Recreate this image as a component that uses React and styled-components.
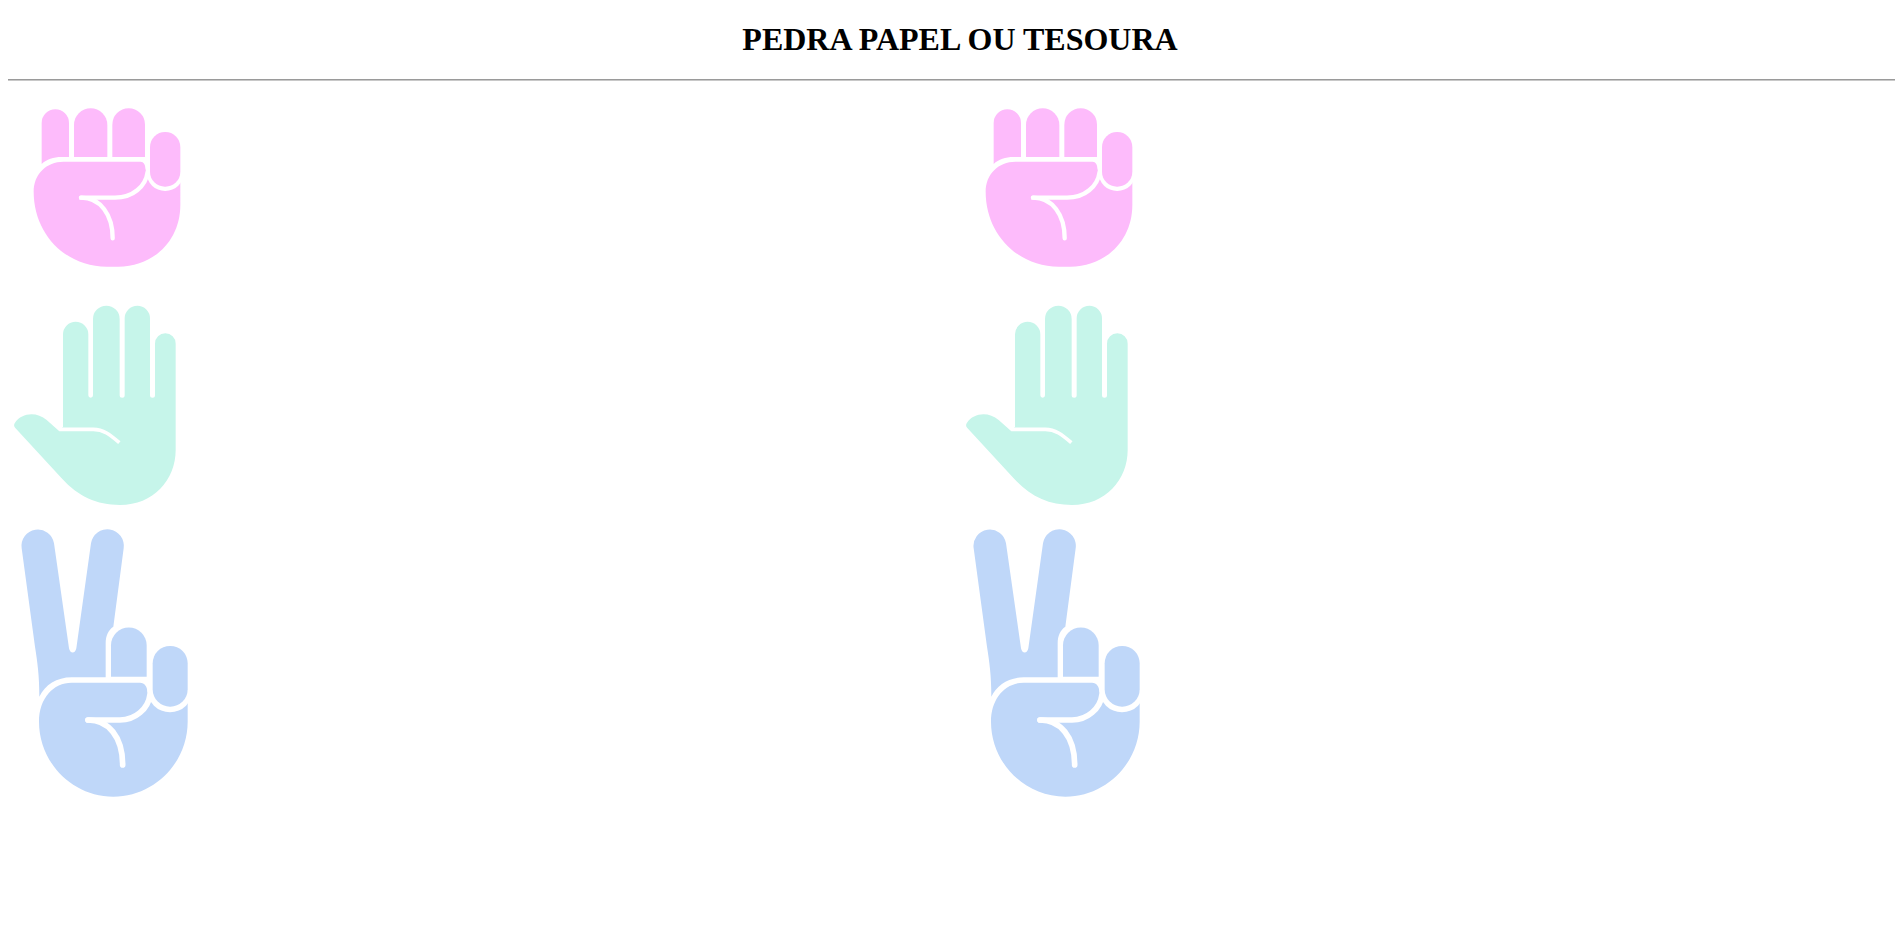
import React from "react";
import styled, { createGlobalStyle } from "styled-components";

const Global = createGlobalStyle`
  html { overflow: hidden; }
  body { margin: 8px; width: 1904px; background: #fff; font-family: "Liberation Serif", "Times New Roman", serif; }
`;

const Title = styled.h1`
  margin: 12.5px 0 21.94px;
  font-size: 32px;
  font-weight: 700;
  text-align: center;
  color: #000;
`;

const Rule = styled.hr`
  margin: 8px 0 9px;
  height: 0;
  border: 0;
  border-top: 1px solid #9a9a9a;
  border-bottom: 1px solid #c8c8c8;
`;

const Board = styled.main`
  display: grid;
  grid-template-columns: 1fr 1fr;
`;

const Column = styled.section`
  display: flex;
  flex-direction: column;
`;

const HandSvg = styled.svg`
  display: block;
  width: 202px;
  height: ${(p) => p.$h}px;
`;

const Rock = () => (
  <HandSvg $h={190} viewBox="24 0 606 570" aria-label="Pedra">
    <g fill="#FDBBFB">
      <path d="M125 222V99A41 41 0 0 1 207 99V201H185C160 201 140 208 125 222Z" />
      <path d="M222 201V105A50 50 0 0 1 322 105V201Z" />
      <path d="M337 201V104A49 49 0 0 1 435 104V201Z" />
      <path d="M101 305C101 252 140 215 190 215H422C431 215 436 224 436 235L442 262L541 270V345C541 452 460 530 355 530H320C195 530 101 430 101 305Z" />
    </g>
    <rect x="440" y="121" width="111" height="182" rx="55" fill="#fff" />
    <rect x="450" y="126" width="91" height="164" rx="45" fill="#FDBBFB" />
    <g fill="none" stroke="#fff" strokeWidth="13" strokeLinecap="round">
      <path d="M443 245C437 290 398 323 345 323H243" />
      <path d="M243 323C302 323 338 375 338 445" />
    </g>
  </HandSvg>
);

const Paper = () => (
  <HandSvg $h={235} viewBox="24 -30 606 705" aria-label="Papel">
    <path
      fill="#C6F5EA"
      d="M189 410V133A38 38 0 0 1 265 133V316A7 7 0 0 0 279 316V87A40 40 0 0 1 359 87V316A7.5 7.5 0 0 0 374 316V85A38 38 0 0 1 450 85V316A7.5 7.5 0 0 0 465 316V161A31 31 0 0 1 527 161V480C527 570 460 645 360 645C290 645 235 620 185 565L46 414Q39 406 45 398C65 368 110 364 140 390L178 424Z"
    />
    <path d="M178 418H280C310 418 330 434 358 458" fill="none" stroke="#fff" strokeWidth="11" />
  </HandSvg>
);

const Scissors = () => (
  <HandSvg $h={295} viewBox="24 0 606 885" aria-label="Tesoura">
    <g fill="#BFD7F9">
      <path d="M65 100A49 49 0 0 1 162 85L207 400C210 417 226 417 229 400L273 85A49 49 0 0 1 371 100L340 335C325 345 317 362 317 385V487H215C170 487 135 510 118 545C118 480 112 440 105 395Z" />
      <path d="M333 485V391A53.5 53.5 0 0 1 440 391V485Z" />
      <path d="M117 620C117 550 160 503 215 503H420C434 503 442 515 442 530L450 555L563 555V620C563 743 463 845 340 845C217 845 117 743 117 620Z" />
    </g>
    <rect x="442" y="384" width="136" height="208" rx="68" fill="#fff" />
    <rect x="458" y="393" width="105" height="182" rx="52" fill="#BFD7F9" />
    <g fill="none" stroke="#fff" strokeWidth="17" strokeLinecap="round">
      <path d="M450 538C445 582 405 615 360 615H264" />
      <path d="M264 615C325 615 368 665 368 750" />
    </g>
  </HandSvg>
);

const Hands = () => (
  <Column>
    <Rock />
    <Paper />
    <Scissors />
  </Column>
);

export default function App() {
  return (
    <>
      <Global />
      <Title>PEDRA PAPEL OU TESOURA</Title>
      <Rule />
      <Board>
        <Hands />
        <Hands />
      </Board>
    </>
  );
}
